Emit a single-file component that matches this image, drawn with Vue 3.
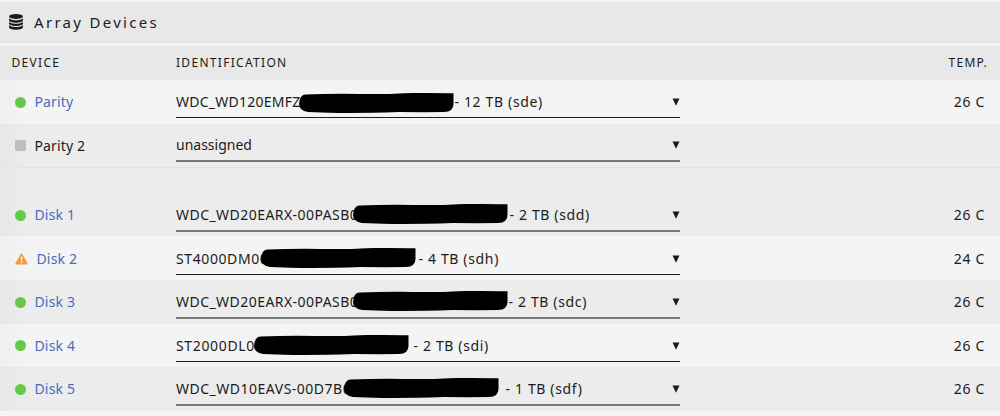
<template>
  <div class="page">
    <div class="title-bar">
      <svg class="db-icon" viewBox="0 0 14 16">
        <ellipse cx="7" cy="2.6" rx="7" ry="2.5" />
        <path d="M0 4.2c1 1.6 4 2 7 2s6-.4 7-2v2.1c0 1.5-3.1 2.5-7 2.5S0 7.8 0 6.3z" />
        <path d="M0 7.7c1 1.6 4 2 7 2s6-.4 7-2v1.9c0 1.5-3.1 2.5-7 2.5s-7-1-7-2.5z" />
        <path d="M0 11c1 1.6 4 2 7 2s6-.4 7-2v2c0 1.7-3.1 2.8-7 2.8S0 14.7 0 13z" />
      </svg>
      <span class="title">Array Devices</span>
    </div>
    <div class="table">
      <div class="row head">
        <span class="col-device">DEVICE</span>
        <span class="col-ident">IDENTIFICATION</span>
        <span class="col-temp">TEMP.</span>
      </div>
      <template v-for="d in devices" :key="d.name">
        <div v-if="d.name === 'Disk 1'" class="spacer"></div>
        <div class="row" :class="d.light ? 'light' : 'dark'">
          <div class="col-device">
            <svg v-if="d.status === 'warning'" class="warn-icon" viewBox="0 0 14 12">
              <path d="M7 .3c.4 0 .7.2.9.5l5.6 9.7c.4.7 0 1.5-.8 1.500H1.300c-.8 0-1.200-.8-.8-1.500L6.100.8c.2-.3.5-.5.9-.5z" />
              <path class="mark" d="M6.100 3.700h1.800l-.3 4.200H6.400z" />
              <circle class="mark" cx="7" cy="9.600" r="1" />
            </svg>
            <span v-else class="orb" :class="d.status"></span>
            <span class="name" :class="{ link: d.status !== 'empty' }">{{ d.name }}</span>
          </div>
          <div class="col-ident">
            <div class="select">
              <span class="model" :style="d.start ? { width: d.start + 'px', letterSpacing: d.track + 'px' } : null">{{ d.model }}</span>
              <template v-if="d.start">
                <svg class="redact" viewBox="0 0 155 20">
                  <path d="M7 1.400Q30 .6 60 .9T100 .4T154.500 .3V11Q154.500 18.700 145 19Q125 19.300 100 19Q60 20.300 30 19.700L9 19Q0 17.500 0 11Q.5 3 5 1.700z" />
                </svg>
                <span class="size" :style="{ marginLeft: d.gap + 'px' }">{{ d.size }}</span>
              </template>
              <svg class="arrow" viewBox="0 0 8 8"><path d="M.5.5h7L4 7.800z" /></svg>
            </div>
          </div>
          <span class="col-temp">{{ d.temp }}</span>
        </div>
      </template>
    </div>
  </div>
</template>

<script setup>
// start: where the hidden serial begins, gap: space between it and the size
const devices = [
  { name: 'Parity', status: 'ok', model: 'WDC_WD120EMFZ', start: 123, track: 0.25, gap: 0.5, size: '- 12 TB (sde)', temp: '26 C', light: true },
  { name: 'Parity 2', status: 'empty', model: 'unassigned', temp: '', light: false },
  { name: 'Disk 1', status: 'ok', model: 'WDC_WD20EARX-00PASB0', start: 177, track: 0.45, gap: 1.5, size: '- 2 TB (sdd)', temp: '26 C', light: false },
  { name: 'Disk 2', status: 'warning', model: 'ST4000DM00', start: 85, track: 0.6, gap: 2.5, size: '- 4 TB (sdh)', temp: '24 C', light: true },
  { name: 'Disk 3', status: 'ok', model: 'WDC_WD20EARX-00PASB0', start: 177, track: 0.45, gap: 0.5, size: '- 2 TB (sdc)', temp: '26 C', light: false },
  { name: 'Disk 4', status: 'ok', model: 'ST2000DL0', start: 77.5, track: 0.65, gap: 5, size: '- 2 TB (sdi)', temp: '26 C', light: true },
  { name: 'Disk 5', status: 'ok', model: 'WDC_WD10EAVS-00D7B0', start: 167.5, track: 0.5, gap: 7, size: '- 1 TB (sdf)', temp: '26 C', light: false },
]
</script>

<style>
body {
  margin: 0;
  background: #f4f4f4;
}
</style>

<style scoped>
.page {
  height: 416px;
  padding-top: 2px;
  box-sizing: border-box;
  overflow: hidden;
  background: #f4f4f4;
  color: #1c1b1b;
  font-family: "Noto Sans", sans-serif;
  font-size: 14px;
}

.title-bar {
  display: flex;
  align-items: center;
  height: 41px;
  padding: 0 9px 2px;
  background: #e8e8e8;
  box-sizing: border-box;
}

.db-icon {
  width: 14px;
  height: 16px;
  fill: #1c1b1b;
  margin-right: 11px;
}

.title {
  font-size: 15px;
  letter-spacing: 2.3px;
}

.table {
  margin-top: 3px;
}

.row {
  display: flex;
  align-items: center;
  height: 43.6px;
}

.row.head {
  height: 34px;
  padding-bottom: 2px;
  box-sizing: border-box;
  background: #e8e8e8;
  font-size: 12px;
  letter-spacing: 1.3px;
}

.row.head .col-device {
  padding-left: 11.5px;
}

.light { background: linear-gradient(90deg, #efefef, #f4f4f4 30px); }
.dark { background: linear-gradient(90deg, #e7e7e7, #ececec 30px); }

.spacer {
  height: 25.6px;
  background: linear-gradient(90deg, #e7e7e7, #ececec 30px);
  border-top: 1px solid #e4e4e4;
  box-sizing: border-box;
}

.col-device {
  display: flex;
  align-items: center;
  width: 176px;
  padding-left: 15px;
  box-sizing: border-box;
  flex-shrink: 0;
}

.orb {
  width: 11px;
  height: 11px;
  margin-top: 1px;
  margin-right: 8.5px;
}

.name {
  letter-spacing: 0.15px;
}

.ok {
  background: #65c84b;
  border-radius: 50%;
}

.empty {
  background: #bebebe;
  border-radius: 1.5px;
}

.warn-icon {
  width: 13px;
  height: 12px;
  fill: #f09a3a;
  margin-top: 1px;
  margin-right: 8.5px;
}

.mark { fill: #f7f3ee; }

.link { color: #486dba; }

.col-ident {
  width: 503.5px;
  flex-shrink: 0;
}

.select {
  display: flex;
  align-items: center;
  height: 32px;
  border-bottom: 1px solid #1c1b1b;
  white-space: nowrap;
}

.dark .select {
  border-bottom: 2px solid #777;
}

.model,
.size {
  margin-top: 1px;
}

.redact {
  width: 155px;
  height: 20px;
  flex-shrink: 0;
  z-index: 1;
}

.head + .row .redact {
  margin-top: 3px;
}

.size {
  letter-spacing: 0.65px;
}

.arrow {
  width: 8px;
  height: 8px;
  margin: 2px 0 0 auto;
  fill: #1c1b1b;
}

.col-temp {
  flex: 1;
  padding-right: 15px;
  text-align: right;
  letter-spacing: 0.7px;
}

.row.head .col-temp {
  padding-right: 12px;
  letter-spacing: 1.25px;
}
</style>
